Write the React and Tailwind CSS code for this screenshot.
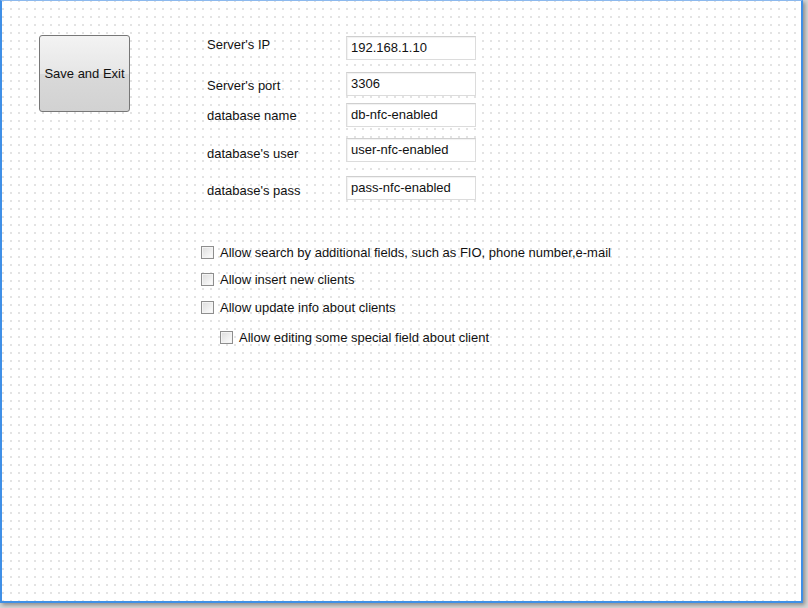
import React from 'react';

const fields = [
  { label: "Server's IP", value: '192.168.1.10', mt: 'mt-[1px]', gap: 'mt-0' },
  { label: "Server's port", value: '3306', mt: 'mt-[6px]', gap: 'mt-[12px]' },
  { label: 'database name', value: 'db-nfc-enabled', mt: 'mt-[5px]', gap: 'mt-[7px]' },
  { label: "database's user", value: 'user-nfc-enabled', mt: 'mt-[8px]', gap: 'mt-[11px]' },
  { label: "database's pass", value: 'pass-nfc-enabled', mt: 'mt-[7px]', gap: 'mt-[14px]' },
];

const options = [
  { text: 'Allow search by additional fields, such as FIO, phone number,e-mail', cls: 'mt-0' },
  { text: 'Allow insert new clients', cls: 'mt-[14px]' },
  { text: 'Allow update info about clients', cls: 'mt-[15px]' },
  { text: 'Allow editing some special field about client', cls: 'mt-[17px] ml-[19px]' },
];

function Box() {
  return (
    <span className="w-[13px] h-[13px] shrink-0 border border-[#8e8e8e] bg-[linear-gradient(135deg,#dcdcdc,#ffffff)] shadow-[inset_0_0_0_1px_#f4f4f4]"></span>
  );
}

export default function App() {
  return (
    <div className="w-[808px] h-[608px] bg-[#d6d6d6] font-['Liberation_Sans',Arial,sans-serif] text-[13px] text-[#111]">
      <div className="w-[803px] h-[603px] border-2 border-t border-[#3f8fe6] border-t-[#8cb9ee] bg-white bg-[radial-gradient(circle,#e3e3e3_0.8px,transparent_1px)] bg-[size:8px_8px] bg-[position:5px_4px] shadow-[2px_2px_4px_rgba(0,0,0,0.35)] flex">
        <div className="pl-[37px] pt-[34px]">
          <button className="w-[91px] h-[77px] rounded-[3px] border border-[#777] bg-[linear-gradient(#f3f3f3,#e6e6e6_50%,#d9d9d9_51%,#d2d2d2)] text-[13px] text-[#111] flex items-center justify-center">
            Save and Exit
          </button>
        </div>

        <div className="pl-[71px] pt-[35px] flex flex-col">
          {fields.map((f) => (
            <div key={f.label} className={`flex items-start ${f.gap}`}>
              <span className={`w-[139px] ml-[6px] leading-4 ${f.mt}`}>{f.label}</span>
              <div className="w-[130px] h-[24px] bg-white border border-[#dcdcdc] border-t-[#cfcfcf] shadow-[inset_1px_1px_1px_rgba(0,0,0,0.06)] pl-[4px] flex items-center">
                <span className="leading-4 -mt-[1px]">{f.value}</span>
              </div>
            </div>
          ))}

          <div className="mt-[46px] flex flex-col">
            {options.map((o) => (
              <div key={o.text} className={`flex items-center gap-[6px] h-[13px] ${o.cls}`}>
                <Box />
                <span className="leading-4 whitespace-nowrap">{o.text}</span>
              </div>
            ))}
          </div>
        </div>
      </div>
    </div>
  );
}
